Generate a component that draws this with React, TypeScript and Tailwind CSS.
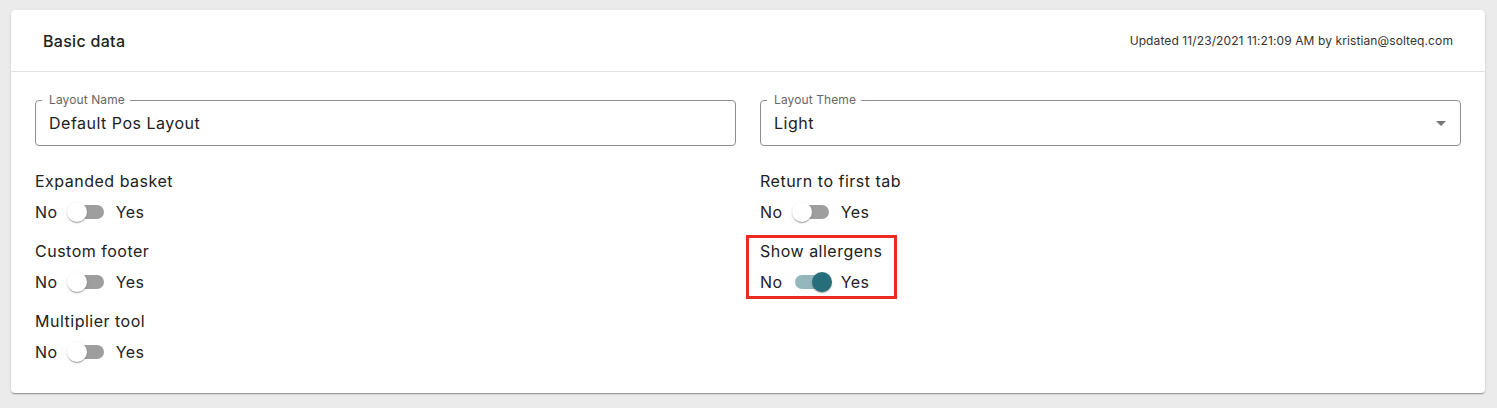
import React from "react";

const FONT = { fontFamily: "Inter, 'Noto Sans', sans-serif" };

function Toggle({ checked }: { checked: boolean }) {
  return (
    <span className="relative inline-flex h-[38px] w-[58px] shrink-0 items-center p-[12px]">
      <span
        className={
          checked
            ? "block h-[14px] w-[34px] rounded-[7px] bg-[#94b7be]"
            : "block h-[14px] w-[34px] rounded-[7px] bg-[#9e9e9e]"
        }
      />
      <span
        className={
          checked
            ? "absolute left-[29px] top-[9px] h-[20px] w-[20px] rounded-full bg-[#276e7b] shadow-[0_2px_1px_-1px_rgba(0,0,0,0.2),0_1px_1px_0_rgba(0,0,0,0.14),0_1px_3px_0_rgba(0,0,0,0.12)]"
            : "absolute left-[9px] top-[9px] h-[20px] w-[20px] rounded-full bg-white shadow-[0_2px_1px_-1px_rgba(0,0,0,0.2),0_1px_1px_0_rgba(0,0,0,0.14),0_1px_3px_0_rgba(0,0,0,0.12)]"
        }
      />
    </span>
  );
}

function SwitchGroup({ label, checked = false }: { label: string; checked?: boolean }) {
  return (
    <div className="flex flex-col">
      <div className="h-[24px] text-[16px] leading-[24px] tracking-[0.5px] text-[#212121]">{label}</div>
      <div className="flex h-[38px] items-center text-[16px] tracking-[0.5px] text-[#212121]">
        <span>No</span>
        <Toggle checked={checked} />
        <span>Yes</span>
      </div>
    </div>
  );
}

function Field({ label, value, select = false }: { label: string; value: string; select?: boolean }) {
  return (
    <div className="relative h-[46px] rounded-[4px] border border-[#8e8e8e]">
      <span className="absolute left-[6px] top-[-7px] bg-white pl-[7px] pr-[5px] text-[12px] leading-[12px] tracking-[0.1px] text-[#666666]">
        {label}
      </span>
      <div className="flex h-full items-center pl-[13px] pr-[7px] text-[16px] tracking-[0.5px] text-[#212121]">
        <span className="flex-1">{value}</span>
        {select && (
          <svg width="24" height="24" viewBox="0 0 24 24" className="fill-[#757575]">
            <path d="M7 10l5 5 5-5z" />
          </svg>
        )}
      </div>
    </div>
  );
}

export default function App() {
  return (
    <div style={FONT} className="h-[408px] w-full bg-[#ebebeb] pl-[11px] pr-[12px] pt-[10px]">
      <div className="rounded-[4px] bg-white shadow-[0_2px_1px_-1px_rgba(0,0,0,0.2),0_1px_1px_0_rgba(0,0,0,0.14),0_1px_3px_0_rgba(0,0,0,0.12)]">
        <div className="flex h-[62px] items-center justify-between border-b border-[#e3e3e3] px-[32px]">
          <span className="text-[16px] font-medium tracking-[0.3px] text-[#212121]">Basic data</span>
          <span className="text-[12px] tracking-[0.1px] text-[#333333]">
            Updated 11/23/2021 11:21:09 AM by kristian@solteq.com
          </span>
        </div>
        <div className="grid grid-cols-2 gap-x-[24px] px-[24px] pb-[22px] pt-[28px]">
          <div className="flex flex-col">
            <Field label="Layout Name" value="Default Pos Layout" />
            <div className="mt-[23px] flex flex-col gap-[8px]">
              <SwitchGroup label="Expanded basket" />
              <SwitchGroup label="Custom footer" />
              <SwitchGroup label="Multiplier tool" />
            </div>
          </div>
          <div className="flex flex-col">
            <Field label="Layout Theme" value="Light" select />
            <div className="mt-[23px] flex flex-col gap-[8px]">
              <SwitchGroup label="Return to first tab" />
              <div className="relative self-start">
                <SwitchGroup label="Show allergens" checked />
                <div className="pointer-events-none absolute left-[-14px] top-[-4px] h-[64px] w-[151px] border-[3px] border-[#ec2a1f]" />
              </div>
            </div>
          </div>
        </div>
      </div>
    </div>
  );
}
